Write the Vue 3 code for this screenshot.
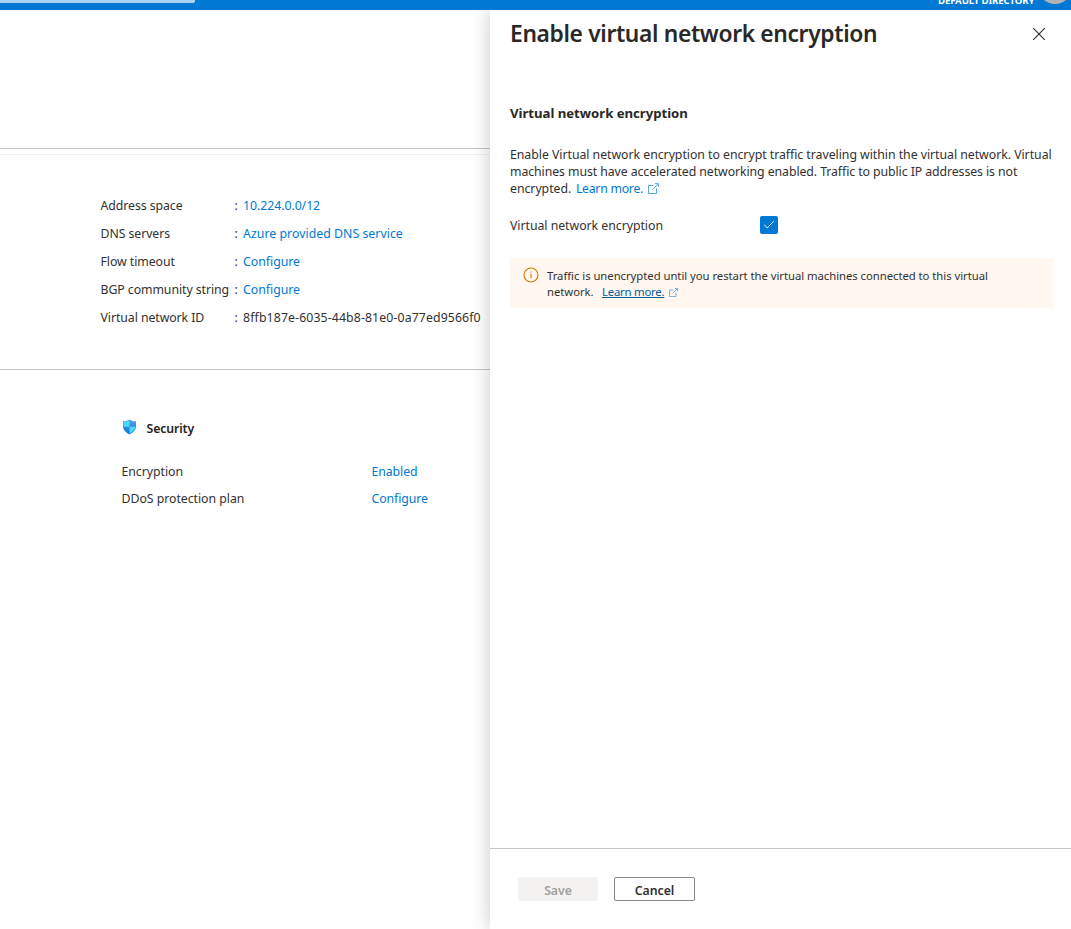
<script setup>
import { ref } from 'vue'

const essentials = [
  { label: 'Address space', value: '10.224.0.0/12', link: true, fit: 'tight' },
  { label: 'DNS servers', value: 'Azure provided DNS service', link: true, fit: 'loose' },
  { label: 'Flow timeout', value: 'Configure', link: true },
  { label: 'BGP community string', value: 'Configure', link: true },
  { label: 'Virtual network ID', value: '8ffb187e-6035-44b8-81e0-0a77ed9566f0', link: false, fit: 'wide' }
]
const security = [
  { label: 'Encryption', value: 'Enabled' },
  { label: 'DDoS protection plan', value: 'Configure' }
]
const encryption = ref(true)
</script>

<template>
  <div class="portal">
    <header class="topbar">
      <div class="search"></div>
      <span class="directory">DEFAULT DIRECTORY</span>
      <span class="avatar"></span>
    </header>

    <div class="body">
      <main class="overview">
        <div class="toolbar"></div>
        <dl class="essentials">
          <div v-for="item in essentials" :key="item.label" class="row">
            <dt>{{ item.label }}</dt>
            <dd class="colon">:</dd>
            <dd :class="[{ link: item.link }, item.fit]">{{ item.value }}</dd>
          </div>
        </dl>
        <section class="security">
          <h3>
            <svg class="shield" width="15" height="16" viewBox="0 0 15 16">
              <defs>
                <linearGradient id="shield-blue" x1="0" y1="0" x2="0" y2="1">
                  <stop offset="0" stop-color="#5ea0ef" />
                  <stop offset="1" stop-color="#0078d4" />
                </linearGradient>
                <clipPath id="shield-inner">
                  <path d="M7.500 1.300C9.300 2.500 11 2.900 13.400 2.900V7.600C13.400 10.900 10.300 13.200 7.500 14.800C4.700 13.200 1.600 10.900 1.600 7.600V2.900C4 2.900 5.700 2.500 7.500 1.300Z" />
                </clipPath>
              </defs>
              <path d="M7.500 .5C9.500 1.900 11.400 2.300 14 2.300V7.600C14 11.400 10.600 13.800 7.500 15.500C4.400 13.800 1 11.400 1 7.600V2.300C3.600 2.300 5.500 1.900 7.500 .5Z" fill="url(#shield-blue)" />
              <g clip-path="url(#shield-inner)" fill="#4cdcfb">
                <path d="M0 0H7.500V7.800H0Z" />
                <path d="M7.500 7.800H15V16H7.500Z" />
              </g>
            </svg>
            Security
          </h3>
          <div v-for="item in security" :key="item.label" class="row">
            <span class="name">{{ item.label }}</span>
            <a class="link">{{ item.value }}</a>
          </div>
        </section>
      </main>

      <aside class="panel">
        <div class="panel-head">
          <h1>Enable virtual network encryption</h1>
          <svg class="close" width="14" height="14" viewBox="0 0 14 14">
            <path d="M1.200 1.200L12.800 12.800M12.800 1.200L1.200 12.800" stroke="#323130" stroke-width="1.150" fill="none" />
          </svg>
        </div>

        <div class="panel-body">
          <h2>Virtual network encryption</h2>
          <p class="intro">
            Enable Virtual network encryption to encrypt traffic traveling within the virtual network. Virtual<br />
            <span class="second">machines must have accelerated networking enabled. Traffic to public IP addresses is not</span><br />
            encrypted. <a class="link more">Learn more.</a>
            <svg class="external" width="11" height="11" viewBox="0 0 11 11">
              <path d="M5.500 2.500H.5V10.500H8.500V5.500M4.500 6.500L10 1M7 .6H10.400V4" />
            </svg>
          </p>

          <div class="field">
            <span class="field-label">Virtual network encryption</span>
            <span class="checkbox" role="checkbox" :aria-checked="encryption" @click="encryption = !encryption">
              <svg v-if="encryption" width="18" height="18" viewBox="0 0 18 18">
                <path d="M4.200 8.900L7.200 11.800L13.700 5.300" stroke="#fff" stroke-width="1" fill="none" />
              </svg>
            </span>
          </div>

          <div class="callout">
            <svg class="info" width="16" height="16" viewBox="0 0 16 16">
              <circle cx="8" cy="8" r="7" fill="none" stroke="#db7500" stroke-width="1.100" />
              <path d="M8 6.800V11.200M8 4.500V5.600" stroke="#db7500" stroke-width="1.100" />
            </svg>
            <div>
              Traffic is unencrypted until you restart the virtual machines connected to this virtual<br />
              network. <a class="more">Learn more.</a>
              <svg class="external" width="9" height="9" viewBox="0 0 11 11">
                <path d="M5.500 2.500H.5V10.500H8.500V5.500M4.500 6.500L10 1M7 .6H10.400V4" />
              </svg>
            </div>
          </div>
        </div>

        <footer>
          <button class="save" disabled>Save</button>
          <button class="cancel">Cancel</button>
        </footer>
      </aside>
    </div>
  </div>
</template>

<style scoped>
.portal {
  width: 1071px;
  height: 929px;
  display: flex;
  flex-direction: column;
  overflow: hidden;
  background: #fff;
  color: #323130;
  font: 12.3px "Noto Sans", "Open Sans", sans-serif;
  letter-spacing: -0.035px;
  white-space: nowrap;
}
.topbar {
  flex: none;
  height: 10px;
  background: #0078d4;
  display: flex;
  align-items: flex-start;
  overflow: hidden;
}
.search {
  width: 195px;
  height: 3px;
  background: #abd3f2;
  border-radius: 0 0 2px 0;
}
.directory {
  margin: -6px 0 0 743px;
  line-height: 14px;
  font-size: 9.6px;
  font-weight: 700;
  letter-spacing: -0.120px;
  color: #fff;
}
.avatar {
  flex: none;
  width: 34px;
  height: 34px;
  margin: -30px -1px 0 auto;
  border-radius: 50%;
  background: #b3b3b3;
}
.body {
  flex: 1;
  display: flex;
}
.overview {
  flex: none;
  width: 490px;
}
.toolbar {
  height: 138px;
  border-bottom: 1px solid #c4c4c4;
}
.essentials {
  margin: 5px 0 0;
  height: 177px;
  padding: 37px 0 0 100.500px;
  border-top: 1px solid #f3f2f1;
  border-bottom: 1px solid #c8c6c4;
}
.row {
  display: flex;
}
.essentials .row {
  line-height: 28px;
}
dt {
  width: 134px;
  letter-spacing: -0.070px;
}
dd {
  margin: 0;
}
.colon {
  width: 8.600px;
}
.tight {
  letter-spacing: -0.060px;
}
.loose {
  letter-spacing: 0.030px;
}
.wide {
  letter-spacing: 0.110px;
}
.link {
  color: #0078d4;
}
.security {
  padding: 49px 0 0 121.500px;
}
h3 {
  display: flex;
  align-items: center;
  margin: 0 0 19px;
  line-height: 20px;
  font-size: 12.3px;
  font-weight: 600;
  letter-spacing: -0.120px;
  color: #252423;
}
.shield {
  margin: -5px 10px 0 0;
}
.security .row {
  line-height: 27px;
}
.name {
  width: 250px;
}
.security .link {
  letter-spacing: -0.080px;
}
.panel {
  flex: 1;
  display: flex;
  flex-direction: column;
  background: #fff;
  box-shadow: 0 0 18px rgba(0, 0, 0, 0.220);
  clip-path: inset(0 0 0 -30px);
}
.panel-head {
  display: flex;
  justify-content: space-between;
  align-items: center;
  height: 47px;
  padding: 0 25px 0 20px;
}
h1 {
  margin: 0;
  line-height: 30px;
  font-size: 22.8px;
  font-weight: 600;
  letter-spacing: -0.345px;
  color: #292827;
}
.panel-body {
  flex: 1;
  padding: 46px 18px 0 20px;
}
h2 {
  margin: 0;
  line-height: 20px;
  font-size: 13.2px;
  font-weight: 700;
  letter-spacing: -0.030px;
  color: #292827;
}
.intro {
  margin: 23px 0 0;
  line-height: 17px;
}
.second {
  letter-spacing: -0.080px;
}
.more {
  margin-left: 1.500px;
  letter-spacing: -0.270px;
}
.external {
  margin-left: 5px;
  vertical-align: -1px;
  fill: none;
  stroke: #2b8fdc;
  stroke-width: 0.800;
}
.field {
  display: flex;
  align-items: center;
  height: 18px;
  margin-top: 19px;
}
.field-label {
  width: 250px;
}
.checkbox {
  width: 18px;
  height: 18px;
  border-radius: 2px;
  background: #0078d4;
}
.checkbox svg {
  display: block;
}
.callout {
  display: flex;
  height: 40px;
  margin-top: 24px;
  padding: 10px 12px 0;
  background: #fff7f0;
  line-height: 16px;
  font-size: 11.300px;
}
.info {
  flex: none;
  margin: -1.500px 8.500px 0 0.500px;
}
.callout .more {
  margin-left: 5.500px;
  letter-spacing: -0.200px;
  color: #005a9e;
  text-decoration: underline;
}
footer {
  display: flex;
  gap: 16px;
  height: 52px;
  padding: 28px 28px 0;
  border-top: 1px solid #c8c6c4;
}
button {
  box-sizing: border-box;
  height: 24px;
  padding: 2px 0 0;
  border: 0;
  border-radius: 2px;
  font: 600 12.3px "Noto Sans", "Open Sans", sans-serif;
  letter-spacing: -0.050px;
}
.save {
  width: 80px;
  background: #f3f2f1;
  color: #a19f9d;
}
.cancel {
  width: 81px;
  border: 1px solid #8a8886;
  background: #fff;
  color: #323130;
}
</style>
